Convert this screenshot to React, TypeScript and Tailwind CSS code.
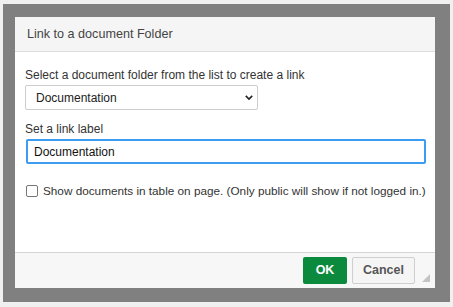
export default function App() {
  return (
    <div className="h-[307px] w-[453px] bg-[#f0f0f0] pl-[3px] pt-[4px] font-['Liberation_Sans','Arial',sans-serif] text-[12px] text-[#333]">
      <div className="h-[298px] w-[447px] bg-[#808080] pl-[12px] pt-[13px]">
        <div className="flex h-[271px] w-[420px] flex-col bg-white">
          {/* header */}
          <div className="flex h-[35px] items-center border-b border-[#dddddd] bg-[#f5f5f5] px-[12px] text-[12.6px] text-[#444]">
            Link to a document Folder
          </div>

          {/* body */}
          <div className="flex-1 px-[10px] pt-[16px]">
            <label className="block leading-[14px]">
              Select a document folder from the list to create a link
            </label>
            <div className="relative mt-[3px] w-[233px]">
              <select
                defaultValue="Documentation"
                className="h-[25px] w-full appearance-none rounded-[2px] border border-[#cccccc] bg-white pl-[10px] text-[12px] text-[#222] outline-none"
              >
                <option>Documentation</option>
              </select>
              <svg
                viewBox="0 0 10 6"
                className="pointer-events-none absolute right-[5px] top-[10px] h-[5px] w-[8px]"
              >
                <path d="M1 1 L5 5 L9 1" fill="none" stroke="#222" strokeWidth="2" />
              </svg>
            </div>

            <label className="mt-[12px] block leading-[14px]">Set a link label</label>
            <input
              defaultValue="Documentation"
              className="mt-[3px] ml-px h-[25px] w-[400px] rounded-[2px] border-2 border-[#3d9bf0] pl-[6px] text-[12px] text-[#111] outline-none"
            />

            <label className="mt-[20px] ml-px flex items-center gap-[5px] whitespace-nowrap text-[11.75px] leading-[14px]">
              <span className="h-[12px] w-[12px] shrink-0 rounded-[2px] border border-[#767676] bg-white" />
              Show documents in table on page. (Only public will show if not logged in.)
            </label>
          </div>

          {/* footer */}
          <div className="relative flex h-[36px] items-center justify-end gap-[5px] border-t border-[#d5d5d5] bg-[#f7f7f7] pr-[20px]">
            <button className="h-[27px] w-[44px] rounded-[2px] bg-[#0b8a3e] text-[12.5px] font-bold text-white">
              OK
            </button>
            <button className="h-[27px] w-[63px] rounded-[2px] border border-[#cfcfcf] bg-[#f5f5f5] text-[12.5px] font-bold text-[#555]">
              Cancel
            </button>
            <svg viewBox="0 0 8 8" className="absolute bottom-[6px] right-[5px] h-[8px] w-[8px]">
              <path d="M8 0 L8 8 L0 8 Z" fill="#c4c4c4" />
            </svg>
          </div>
        </div>
      </div>
    </div>
  );
}
